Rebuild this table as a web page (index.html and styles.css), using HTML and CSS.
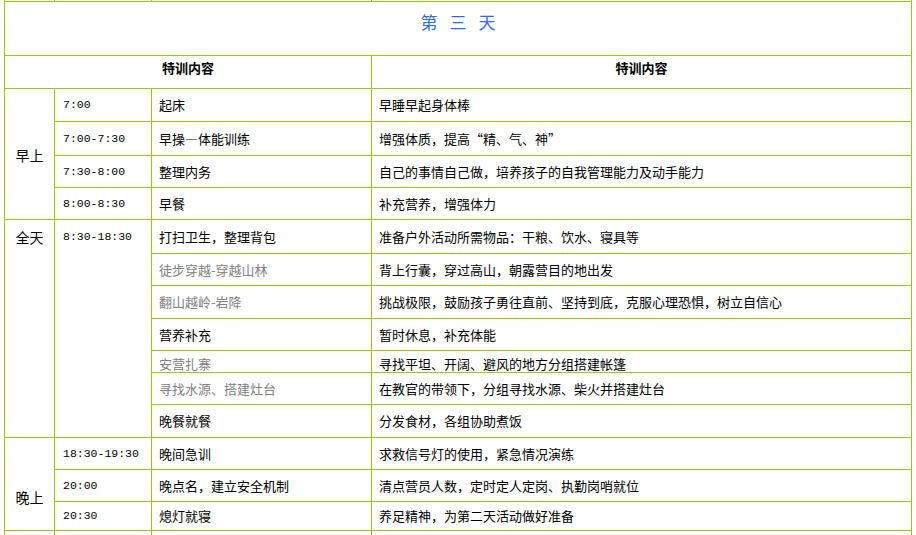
FILE: index.html
```html
<!DOCTYPE html>
<html lang="zh">
<head>
<meta charset="utf-8">
<link rel="stylesheet" href="styles.css">
</head>
<body>
<table class="plan">
  <colgroup>
    <col class="c-period">
    <col class="c-time">
    <col class="c-item">
    <col class="c-desc">
  </colgroup>
  <tr class="r-prev"><td></td><td></td><td></td><td></td></tr>
  <tr class="r-title"><td colspan="4" class="title"><span>第</span><span>三</span><span>天</span></td></tr>
  <tr class="r-head"><th colspan="3">特训内容</th><th>特训内容</th></tr>
  <tr class="h33"><td rowspan="4" class="period mid">早上</td><td class="time">7:00</td><td>起床</td><td>早睡早起身体棒</td></tr>
  <tr class="h34"><td class="time">7:00-7:30</td><td>早操—体能训练</td><td>增强体质，提高“精、气、神”</td></tr>
  <tr class="h32"><td class="time">7:30-8:00</td><td>整理内务</td><td>自己的事情自己做，培养孩子的自我管理能力及动手能力</td></tr>
  <tr class="h32"><td class="time">8:00-8:30</td><td>早餐</td><td>补充营养，增强体力</td></tr>
  <tr class="h34"><td rowspan="7" class="period top">全天</td><td rowspan="7" class="time top">8:30-18:30</td><td>打扫卫生，整理背包</td><td>准备户外活动所需物品：干粮、饮水、寝具等</td></tr>
  <tr class="h32"><td class="muted">徒步穿越-穿越山林</td><td>背上行囊，穿过高山，朝露营目的地出发</td></tr>
  <tr class="h33"><td class="muted">翻山越岭-岩降</td><td>挑战极限，鼓励孩子勇往直前、坚持到底，克服心理恐惧，树立自信心</td></tr>
  <tr class="h32"><td>营养补充</td><td>暂时休息，补充体能</td></tr>
  <tr class="h22"><td class="muted">安营扎寨</td><td>寻找平坦、开阔、避风的地方分组搭建帐篷</td></tr>
  <tr class="h32"><td class="muted">寻找水源、搭建灶台</td><td>在教官的带领下，分组寻找水源、柴火并搭建灶台</td></tr>
  <tr class="h33"><td>晚餐就餐</td><td>分发食材，各组协助煮饭</td></tr>
  <tr class="h32"><td rowspan="3" class="period low">晚上</td><td class="time">18:30-19:30</td><td>晚间急训</td><td>求救信号灯的使用，紧急情况演练</td></tr>
  <tr class="h32"><td class="time">20:00</td><td>晚点名，建立安全机制</td><td>清点营员人数，定时定人定岗、执勤岗哨就位</td></tr>
  <tr class="h29"><td class="time">20:30</td><td>熄灯就寝</td><td>养足精神，为第二天活动做好准备</td></tr>
  <tr class="h32"><td></td><td></td><td></td><td></td></tr>
</table>
</body>
</html>
```

FILE: styles.css
```css
html, body {
  margin: 0;
  padding: 0;
  background: #ffffff;
}

body {
  font-family: "Noto Sans CJK SC", "Liberation Sans", sans-serif;
  font-size: 13px;
  color: #000000;
  overflow: hidden;
}

.plan {
  border-collapse: collapse;
  table-layout: fixed;
  width: 907px;
  margin: -19px 0 0 4px;
}

.c-period { width: 50px; }
.c-time { width: 97px; }
.c-item { width: 220px; }
.c-desc { width: 540px; }

.plan td,
.plan th {
  border: 1px solid #99cc00;
  padding: 0 0 0 7px;
  line-height: 18px;
  vertical-align: middle;
  white-space: nowrap;
  text-align: left;
}

.plan td:nth-child(n) { }

.r-prev { height: 20px; }

.r-title { height: 54px; }

.title {
  text-align: center !important;
  vertical-align: top !important;
  padding: 10px 0 0 0 !important;
  color: #3366ff;
  font-size: 17px;
  line-height: 20px !important;
}

.title span {
  margin: 0 6px;
}

.r-head { height: 33px; }

.plan th {
  text-align: center;
  font-weight: bold;
  padding: 0 0 9px 0;
  font-size: 13px;
}

.h22 { height: 22px; }
.h29 { height: 29px; }
.h32 { height: 32px; }
.h33 { height: 33px; }
.h34 { height: 34px; }

.h22 td { line-height: 14px; padding-top: 5px; }

.plan .period {
  text-align: center;
  padding: 0;
  font-size: 14px;
}

.plan .period.mid { padding-top: 2px; }

.plan .top {
  vertical-align: top;
  padding-top: 8px;
}

.plan .period.low {
  padding-top: 26px;
}

.plan .time {
  font-family: "Liberation Mono", monospace;
  font-size: 11.5px;
  padding-left: 8px;
}

.plan .muted {
  color: #808080;
}
```
